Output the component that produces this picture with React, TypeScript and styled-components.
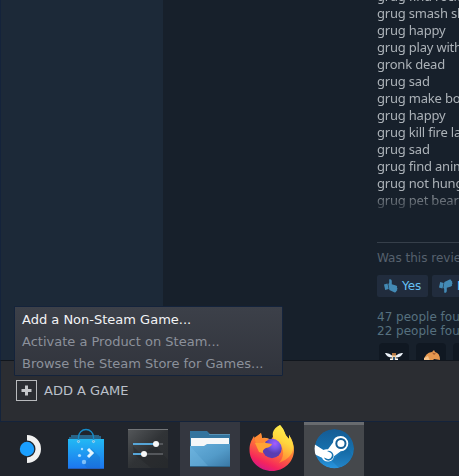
import React from "react";
import styled, { createGlobalStyle } from "styled-components";

const Global = createGlobalStyle`
  * { box-sizing: border-box; }
  body { margin: 0; overflow: hidden; background: #20242b; font-family: "DejaVu Sans", sans-serif; }
  svg { display: block; flex: none; }
`;

const Screen = styled.div`
  position: relative;
  width: 459px;
  height: 476px;
  overflow: hidden;
  display: flex;
  flex-direction: column;
`;

const Client = styled.div`
  height: 360px;
  flex: none;
  display: flex;
  overflow: hidden;
  background: #17202b;
  border-left: 1px solid #14233b;
`;

const Sidebar = styled.div`
  width: 162px;
  flex: none;
  background: #1c2938;
`;

const Main = styled.div`
  flex: 1;
  min-width: 0;
  padding-left: 214px;
  overflow: hidden;
`;

const Review = styled.div`
  height: 227px;
  margin-top: -12px;
  overflow: hidden;
  white-space: nowrap;
  font: 13px/17px "Noto Sans", sans-serif;
  letter-spacing: -0.2px;
  color: #acb2b8;
  mask-image: linear-gradient(#000 202px, transparent 227px);
`;

const Line = styled.div`
  height: 17px;
`;

const Divider = styled.div`
  height: 1px;
  margin-top: 27px;
  background: #363f4a;
`;

const Question = styled.div`
  margin-top: 7px;
  height: 16px;
  font-size: 12px;
  line-height: 16px;
  white-space: nowrap;
  color: #56616e;
`;

const Votes = styled.div`
  display: flex;
  gap: 4px;
  margin-top: 9px;
`;

const Vote = styled.div`
  width: 51px;
  height: 22px;
  flex: none;
  display: flex;
  align-items: center;
  gap: 4px;
  padding-left: 7px;
  border-radius: 2px;
  background: #212c3d;
  color: #67c1f5;
  font-size: 12px;
`;

const Counts = styled.div`
  margin-top: 13px;
  font-size: 12px;
  line-height: 14px;
  white-space: nowrap;
  color: #56707f;
`;

const Awards = styled.div`
  display: flex;
  gap: 7px;
  margin: 5px 0 0 2px;
`;

const Award = styled.div`
  width: 30px;
  height: 30px;
  flex: none;
  border-radius: 4px;
  background: #101822;
`;

const BottomBar = styled.div`
  height: 62px;
  flex: none;
  display: flex;
  align-items: center;
  padding: 0 0 1px 15px;
  border: solid #14233b;
  border-width: 1px 0 1px 1px;
  border-top-color: #11161d;
  background: #2b2d32;
  color: #bbc0ca;
  font-size: 13px;
`;

const Add = styled.div`
  display: flex;
  align-items: center;
  gap: 7px;
`;

const PlusBox = styled.div`
  width: 21px;
  height: 21px;
  display: grid;
  place-items: center;
  border: 1px solid #b8babd;
`;

const Menu = styled.div`
  position: absolute;
  left: 14px;
  top: 306px;
  width: 269px;
  height: 70px;
  border: 1px solid #14233b;
  border-radius: 1px;
  background: linear-gradient(#3c4049, #31343c);
  padding: 2px 7px;
  font-size: 13px;
  line-height: 22px;
`;

const MenuItem = styled.div<{ $active?: boolean }>`
  height: 22px;
  white-space: nowrap;
  color: ${(p) => (p.$active ? "#f2f3f5" : "#8c919b")};
`;

const Taskbar = styled.div`
  flex: 1;
  display: flex;
  gap: 2px;
  background: #21252c;
`;

const Task = styled.div<{ $w?: number; $bg?: string; $strip?: boolean }>`
  width: ${(p) => p.$w ?? 60}px;
  flex: none;
  background: ${(p) => p.$bg ?? "transparent"};
  border-top: 3px solid ${(p) => (p.$strip ? "#686b6f" : "transparent")};
  display: flex;
  justify-content: center;
`;

const Thumb = ({ down = false }: { down?: boolean }) => (
  <svg width="14" height="14" viewBox="0 0 14 14">
    <g transform={down ? "matrix(1 0 0 -1 0 14)" : undefined} fill="#438ab5">
      <path d="M0 5.5 3.5 4.5 4.7 10 1.2 11Z" />
      <path d="M4.3 5.2C5.8 4 5 2 5.2 .5 6.4-.3 8 .3 7.8 3L7.8 5.2 12 6.6Q13.8 7.4 12.8 8.5 14 9.4 13 10.2 13.8 11.6 12.4 12 12.3 13.6 10.7 13.4L5.4 11Z" />
    </g>
  </svg>
);

const WingsAward = () => (
  <svg width="30" height="30" viewBox="0 0 30 30">
    <path d="M6 10Q10 9.5 13 12.5L13 14.5Q8 14.5 6 10M24 10Q20 9.5 17 12.5L17 14.5Q22 14.5 24 10" fill="#edf3fa" />
    <path d="M13 12h4v3l2 4h-8l2-4Z" fill="#f1d1a5" />
    <path d="M13 10h4v2.5h-4Z" fill="#b37743" />
    <path d="M11 15.5h2.5v2.5H11M16.5 15.5H19v2.5h-2.5" fill="#fff" />
    <path d="M14 14h2v4h-2Z" fill="#35597c" />
  </svg>
);

const HorseAward = () => (
  <svg width="30" height="30" viewBox="0 0 30 30">
    <path d="M8 19Q8 10 16 9L18 7 19 9Q24 10 24 17L18 16 14 21 9 21Z" fill="#e6984f" />
    <path d="M8 19 8 15 12 13 14 18 12 21Z" fill="#f6c58d" />
    <path d="M16 9.5l4 1-2 1.5Z" fill="#a65c32" />
  </svg>
);

const Launcher = () => (
  <svg width="54" height="51" viewBox="0 3 54 51">
    <path d="M27 13A14 14 0 0 1 27 41V35.5A8.5 8.5 0 0 0 27 18.5Z" fill="#f1f1f1" />
    <circle cx="27" cy="27" r="7.2" fill="#1a9fff" />
  </svg>
);

const Store = () => (
  <svg width="60" height="51" viewBox="0 3 60 51">
    <defs>
      <linearGradient id="bag" x2="0" y2="1">
        <stop stopColor="#22b9f4" /><stop offset="1" stopColor="#1c75ef" />
      </linearGradient>
    </defs>
    <path d="M15 13h28v1h2v4H13v-3h2Z" fill="#286488" />
    <path d="M12 17h36v30H12Z" fill="url(#bag)" />
    <path d="M12 46h36v1H12Z" fill="#225ebc" />
    <path d="m35 26 9 9v11H31l-4-5 7-5Z" fill="#145ba6" opacity=".22" />
    <path d="M22.5 19.5V15a7.5 7.5 0 0 1 15 0v4.5" fill="none" stroke="#168bc7" strokeWidth="1.3" />
    <circle cx="22.5" cy="19.5" r="1.1" fill="#64abd1" stroke="#d3efff" strokeWidth=".6" />
    <circle cx="37.5" cy="19.5" r="1.1" fill="#64abd1" stroke="#d3efff" strokeWidth=".6" />
    <path d="m32 27 4 4-4 4" fill="none" stroke="#e3f5ff" strokeWidth="3" />
    <g fill="#a8dcff"><circle cx="26" cy="27" r="1.2" /><circle cx="23.5" cy="33.5" r="1.6" /><circle cx="28" cy="40" r="2.2" opacity=".7" /></g>
  </svg>
);

const Settings = () => (
  <svg width="60" height="51" viewBox="0 3 60 51">
    <defs>
      <linearGradient id="panel" x2="1" y2="1">
        <stop stopColor="#54575a" /><stop offset=".5" stopColor="#303336" /><stop offset="1" stopColor="#2b2e31" />
      </linearGradient>
    </defs>
    <path d="M10 7h40v39H10Z" fill="url(#panel)" />
    <path d="M10 7h40v1H10Z" fill="#727579" />
    <path d="m15 24 7 7 16-7 12 14v8H33L16 32Z" fill="#202326" opacity=".35" />
    <path d="M38 22h7M26 32h19" stroke="#54575b" strokeWidth="2" />
    <path d="M15 22h23M15 32h11" stroke="#56a5d7" strokeWidth="2" />
    <circle cx="38" cy="22" r="3" fill="#f7f8f8" /><circle cx="26" cy="32" r="3" fill="#f7f8f8" />
  </svg>
);

const Folder = () => (
  <svg width="60" height="51" viewBox="0 3 60 51">
    <defs>
      <linearGradient id="folder" x2="1" y2="1">
        <stop stopColor="#67afdc" /><stop offset=".55" stopColor="#539bc9" /><stop offset="1" stopColor="#3977a4" />
      </linearGradient>
    </defs>
    <path d="M10 9h17l3 3h20v14H10Z" fill="#34749e" />
    <path d="M29 12h21v1H29Z" fill="#5992b5" />
    <path d="M11 16h38v9H11Z" fill="#f6f7f8" />
    <path d="M10 24h14l3-2h23v23H10Z" fill="url(#folder)" />
    <path d="m10 24 18 20 22 1H10Z" fill="#80c2ea" opacity=".25" />
    <path d="M10 44h40v1H10Z" fill="#2d6388" />
  </svg>
);

const Firefox = () => (
  <svg width="60" height="51" viewBox="0 3 60 51">
    <defs>
      <linearGradient id="fire" x1=".8" y1="0" x2=".35" y2="1">
        <stop stopColor="#fff44f" /><stop offset=".3" stopColor="#ffb03a" /><stop offset=".55" stopColor="#ff7139" /><stop offset=".85" stopColor="#f5255c" /><stop offset="1" stopColor="#d51887" />
      </linearGradient>
      <radialGradient id="globe" cx=".65" cy=".25">
        <stop stopColor="#a65cff" /><stop offset=".5" stopColor="#7655e6" /><stop offset="1" stopColor="#5a3db1" />
      </radialGradient>
      <linearGradient id="tail" x1=".7" y1="0" x2=".4" y2="1">
        <stop stopColor="#fff44f" /><stop offset=".45" stopColor="#ffd63e" /><stop offset="1" stopColor="#ff7d33" />
      </linearGradient>
    </defs>
    <path d="M38 3Q42 7 43 12L47 17V13Q52 20 52 28C52 40 42 49 30 49S7.500 40 7.500 28C7.500 22 9 19 12 14L13 18 19 11 20 16Q25 15 29 18Z" fill="url(#fire)" />
    <path d="M38 3C30 7 29 13 33 19 42 23 44 33 37 41Q50 36 51.500 26 51 20 47 13V17L44 14Q42 7 38 3" fill="url(#tail)" />
    <circle cx="30" cy="26.500" r="9.700" fill="url(#globe)" />
    <path d="M13 21Q20 17 24 21L30 22Q29 25 24 26 20 28 21 31L17 30Z" fill="#ffa334" />
    <path d="M12 16 19 11 20 16 26 18 21 21 14 21Z" fill="#ff8b34" />
  </svg>
);

const Steam = () => (
  <svg width="60" height="51" viewBox="0 3 60 51">
    <defs>
      <linearGradient id="steam" x2="0" y2="1">
        <stop stopColor="#155b94" /><stop offset=".55" stopColor="#1671ae" /><stop offset="1" stopColor="#2995df" />
      </linearGradient>
      <clipPath id="disc"><circle cx="30.3" cy="26.8" r="19.7" /></clipPath>
    </defs>
    <g clipPath="url(#disc)">
      <circle cx="30.3" cy="26.8" r="19.7" fill="url(#steam)" />
      <path d="m28 39 15-13 12 15-16 9Z" fill="#12578b" opacity=".25" />
      <path d="M10 22 19.5 28Q21 27 24 27.3L29 20.5Q29.5 14 36.7 14A7.6 7.6 0 0 1 36.7 29.200L30 34.3A6.3 6.3 0 0 1 18 35.800L10 32Z" fill="#fff" />
      <circle cx="36.9" cy="21.5" r="4.6" fill="#fff" stroke="#175f96" strokeWidth="2" />
      <path d="m20 35.400 3 1.300a3.500 3.500 0 1 0 2.600-6.500l-2.600-1.100A4.900 4.900 0 1 1 20 35.400" fill="#1974b0" />
    </g>
  </svg>
);

const lines = [
  "grug find rock", "grug smash skull", "grug happy", "grug play with gronk", "gronk dead",
  "grug sad", "grug make bonfire", "grug happy", "grug kill fire lady", "grug sad",
  "grug find animal", "grug not hungry", "grug pet bear",
];

export default function App() {
  return (
    <Screen>
      <Global />
      <Client>
        <Sidebar />
        <Main>
          <Review>{lines.map((text, i) => <Line key={i}>{text}</Line>)}</Review>
          <Divider />
          <Question>Was this review helpful?</Question>
          <Votes>
            <Vote><Thumb />Yes</Vote>
            <Vote><Thumb down />No</Vote>
          </Votes>
          <Counts>
            <div>47 people found this review helpful</div>
            <div>22 people found this review funny</div>
          </Counts>
          <Awards>
            <Award><WingsAward /></Award>
            <Award><HorseAward /></Award>
            <Award />
          </Awards>
        </Main>
      </Client>
      <BottomBar>
        <Add>
          <PlusBox>
            <svg width="11" height="11" viewBox="0 0 11 11">
              <path d="M5.5 .5v10M.5 5.5h10" stroke="#c4c6c9" strokeWidth="3" />
            </svg>
          </PlusBox>
          ADD A GAME
        </Add>
      </BottomBar>
      <Taskbar>
        <Task $w={54}><Launcher /></Task>
        <Task><Store /></Task>
        <Task><Settings /></Task>
        <Task $bg="#343740"><Folder /></Task>
        <Task><Firefox /></Task>
        <Task $bg="#45484c" $strip><Steam /></Task>
      </Taskbar>
      <Menu>
        <MenuItem $active>Add a Non-Steam Game...</MenuItem>
        <MenuItem>Activate a Product on Steam...</MenuItem>
        <MenuItem>Browse the Steam Store for Games...</MenuItem>
      </Menu>
    </Screen>
  );
}
